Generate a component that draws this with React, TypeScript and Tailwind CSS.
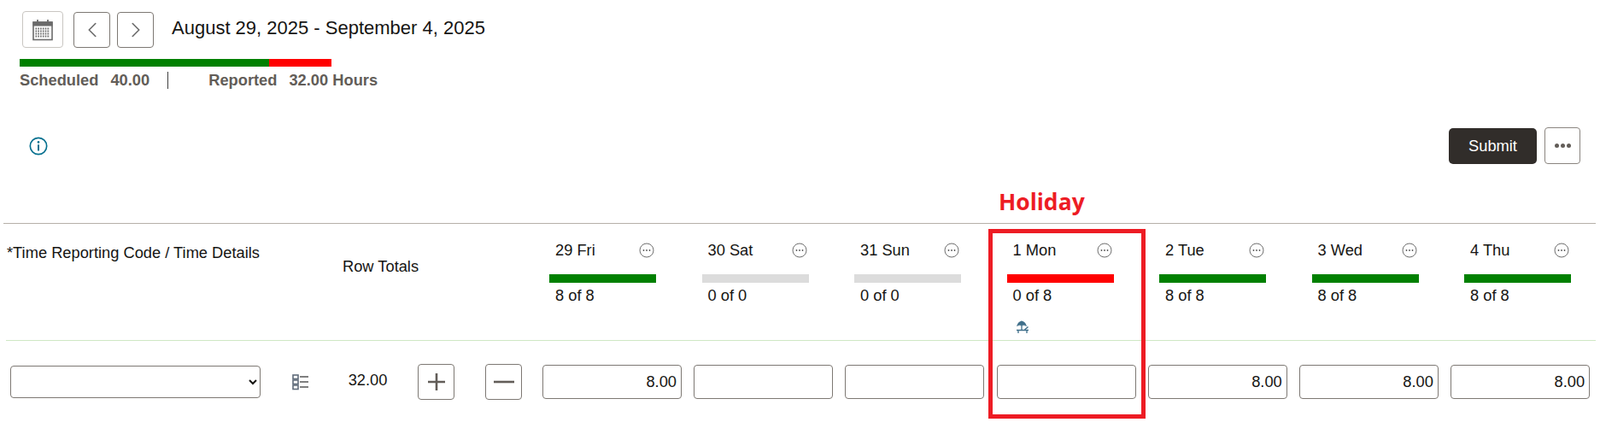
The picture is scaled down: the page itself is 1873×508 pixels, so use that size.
import { ChevronLeft, ChevronRight } from "lucide-react";

const days = [
  { label: "29 Fri", bar: "bg-[#008000]", text: "8 of 8", value: "8.00" },
  { label: "30 Sat", bar: "bg-[#dcdcdc]", text: "0 of 0", value: "" },
  { label: "31 Sun", bar: "bg-[#dcdcdc]", text: "0 of 0", value: "" },
  { label: "1 Mon", bar: "bg-[#ff0000]", text: "0 of 8", value: "", holiday: true },
  { label: "2 Tue", bar: "bg-[#008000]", text: "8 of 8", value: "8.00" },
  { label: "3 Wed", bar: "bg-[#008000]", text: "8 of 8", value: "8.00" },
  { label: "4 Thu", bar: "bg-[#008000]", text: "8 of 8", value: "8.00" },
];

function CalendarIcon() {
  return (
    <svg width="24" height="26" viewBox="0 0 24 26" fill="none" stroke="#6b6b6b">
      <rect x="1" y="4" width="22" height="20.5" strokeWidth="1.6" />
      <rect x="1" y="4" width="22" height="4" fill="#6b6b6b" strokeWidth="1" />
      <path d="M6 1v5M18 1v5" strokeWidth="1.8" />
      <path d="M3.5 11.5h17M3.5 14.5h17M3.5 17.5h17M3.5 20.5h17" strokeWidth="1.8" strokeDasharray="1.6 1.2" />
    </svg>
  );
}

function DotsCircle() {
  return (
    <svg width="18" height="18" viewBox="0 0 18 18" fill="none">
      <circle cx="9" cy="9" r="8" stroke="#6f6f6f" strokeWidth="1" />
      <circle cx="5.5" cy="9" r="0.9" fill="#555" />
      <circle cx="9" cy="9" r="0.9" fill="#555" />
      <circle cx="12.5" cy="9" r="0.9" fill="#555" />
    </svg>
  );
}

// umbrella over a lounge chair
function BeachIcon() {
  return (
    <svg width="16" height="16" viewBox="0 0 16 16" fill="none" stroke="#3f6f8a">
      <path d="M1.5 6.5 Q2.5 2 7 0.8 Q11.5 2 12.5 6.5 Q10 5 7 6 Q4 5 1.5 6.5 Z" fill="#3f6f8a" strokeWidth="0.6" />
      <path d="M7 6v6" strokeWidth="1.3" />
      <path d="M1 11.5h14" strokeWidth="1.5" />
      <path d="M10.5 11 L14.5 7.5" strokeWidth="1.5" />
      <path d="M3 12v3M13 12v3" strokeWidth="1.3" />
    </svg>
  );
}

function ListIcon() {
  return (
    <svg width="20" height="20" viewBox="0 0 20 20" fill="none">
      <rect x="1" y="2" width="6" height="4.5" fill="#fff" stroke="#5f6b7a" strokeWidth="1.6" />
      <rect x="1" y="8" width="6" height="4.5" fill="#fff" stroke="#5f6b7a" strokeWidth="1.6" />
      <rect x="1" y="14" width="6" height="4.5" fill="#fff" stroke="#5f6b7a" strokeWidth="1.6" />
      <path d="M9 4h10M9 10h10M9 16h10" stroke="#555" strokeWidth="1.6" />
    </svg>
  );
}

function DayHeader({ day }: { day: (typeof days)[number] }) {
  return (
    <div className="w-[178.5px] shrink-0">
      <div className="flex items-center w-[124px] pl-[7px] h-[18px]">
        <span className="flex-1">{day.label}</span>
        <span className="mr-[1px]">
          <DotsCircle />
        </span>
      </div>
      <div className={`w-[125px] h-[10px] mt-[19px] ${day.bar}`} />
      <div className="pl-[7px] mt-[6px] leading-[18px]">{day.text}</div>
      {day.holiday && (
        <div className="pl-[10px] mt-[20px]">
          <BeachIcon />
        </div>
      )}
    </div>
  );
}

export default function App() {
  return (
    <div className="relative w-[1873px] h-[508px] overflow-hidden bg-white text-[18.3px] text-[#161513] font-['Liberation_Sans',sans-serif]">
      {/* toolbar */}
      <div className="flex items-center pl-[26px] pt-[13px]">
        <button className="flex items-center justify-center w-[48px] h-[43px] rounded-[4px] border border-[#c9c6c2]">
          <CalendarIcon />
        </button>
        <button className="flex items-center justify-center w-[43px] h-[42px] ml-[12px] rounded-[4px] border border-[#7d7873]">
          <ChevronLeft size={30} strokeWidth={1.3} color="#6b6b6b" />
        </button>
        <button className="flex items-center justify-center w-[43px] h-[42px] ml-[8px] rounded-[4px] border border-[#7d7873]">
          <ChevronRight size={30} strokeWidth={1.3} color="#6b6b6b" />
        </button>
        <div className="ml-[21px] pb-[4px] text-[22px]">August 29, 2025 - September 4, 2025</div>
      </div>

      {/* scheduled vs reported */}
      <div className="flex w-[365px] h-[9px] ml-[23px] mt-[13px]">
        <div className="w-[292px] bg-[#008000]" />
        <div className="flex-1 bg-[#ff0000]" />
      </div>
      <div className="flex items-center h-[20px] ml-[23px] mt-[6px] font-bold text-[#625d58]">
        <span>Scheduled</span>
        <span className="ml-[14px]">40.00</span>
        <span className="w-px h-[20px] bg-[#3f3f3f] ml-[21px]" />
        <span className="ml-[47px]">Reported</span>
        <span className="ml-[14px]">32.00 Hours</span>
      </div>

      {/* actions */}
      <div className="flex items-center justify-between pl-[34px] pr-[23px] mt-[45px]">
        <svg width="22" height="22" viewBox="0 0 20 20" fill="none">
          <circle cx="10" cy="10" r="8.8" stroke="#04708f" strokeWidth="1.5" />
          <circle cx="10" cy="5.8" r="1.2" fill="#04708f" />
          <path d="M10 8.5v6.5" stroke="#04708f" strokeWidth="1.8" />
        </svg>
        <div className="flex items-center gap-[9px]">
          <button className="w-[103px] h-[42px] rounded-[5px] bg-[#312d2a] text-white">Submit</button>
          <button className="flex items-center justify-center gap-[2px] w-[42px] h-[43px] rounded-[4px] border border-[#8a8580]">
            <span className="w-[5px] h-[5px] rounded-full bg-[#625d58]" />
            <span className="w-[5px] h-[5px] rounded-full bg-[#625d58]" />
            <span className="w-[5px] h-[5px] rounded-full bg-[#625d58]" />
          </button>
        </div>
      </div>

      {/* annotation */}
      <div className="pl-[1169px] mt-[26px] h-[37px] text-[26.5px] leading-[37px] font-bold text-[#ed1c24] font-['Open_Sans',sans-serif]">
        Holiday
      </div>

      {/* header row */}
      <div className="flex ml-[4px] mr-[5px] mt-[6px] h-[137px] border-t border-[#b5b0a8]">
        <div className="w-[397px] shrink-0 pl-[4px] pt-[25px] leading-[18px]">*Time Reporting Code / Time Details</div>
        <div className="w-[242px] shrink-0 pt-[41px] leading-[18px]">Row Totals</div>
        <div className="flex pt-[22px]">
          {days.map((d) => (
            <DayHeader key={d.label} day={d} />
          ))}
        </div>
      </div>

      {/* entry row */}
      <div className="flex items-center ml-[7px] mr-[5px] h-[96px] border-t border-[#cfe8c4]">
        <select className="w-[293px] h-[38px] ml-[5px] rounded-[4px] border border-[#7d7873] bg-white" />
        <span className="ml-[37px]">
          <ListIcon />
        </span>
        <span className="w-[47px] ml-[45px] pb-[3px] text-center">32.00</span>
        <button className="flex items-center justify-center w-[43px] h-[42px] ml-[35px] rounded-[4px] border border-[#7d7873]">
          <svg width="24" height="24" viewBox="0 0 24 24" stroke="#625d58" strokeWidth="2.6">
            <path d="M2 12h20M12 2v20" />
          </svg>
        </button>
        <button className="flex items-center justify-center w-[43px] h-[42px] ml-[36px] rounded-[4px] border border-[#7d7873]">
          <svg width="24" height="24" viewBox="0 0 24 24" stroke="#625d58" strokeWidth="2.6">
            <path d="M0 12h24" />
          </svg>
        </button>
        <div className="flex gap-[14.2px] ml-[24px]">
          {days.map((d) => (
            <input
              key={d.label}
              readOnly
              value={d.value}
              className="w-[163px] h-[40px] px-[5px] rounded-[4px] border border-[#7d7873] text-right"
            />
          ))}
        </div>
      </div>

      {/* holiday highlight */}
      <div className="absolute left-[1157px] top-[268px] w-[184px] h-[222px] border-[5px] border-[#ed1c24] pointer-events-none" />
    </div>
  );
}
